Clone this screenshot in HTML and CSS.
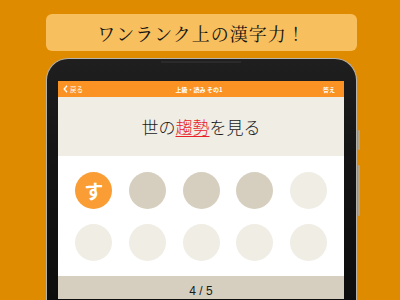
FILE: index.html
```html
<!DOCTYPE html>
<html lang="ja">
<head>
<meta charset="utf-8">
<link rel="stylesheet" href="styles.css">
</head>
<body>
<div class="banner">ワンランク上の漢字力！</div>
<div class="tablet">
  <div class="speaker"></div>
  <div class="btn btn1"></div>
  <div class="btn btn2"></div>
  <div class="screen">
    <div class="topbar">
      <div class="back"><svg width="5" height="8" viewBox="0 0 5 8"><path d="M4 0.8 L1.2 4 L4 7.2" fill="none" stroke="#fff" stroke-width="1.4"/></svg><span>戻る</span></div>
      <div class="title">上級・読み その1</div>
      <div class="answer">答え</div>
    </div>
    <div class="question">世の<span class="target">趨勢</span>を見る</div>
    <div class="choices">
      <div class="dot on">す</div>
      <div class="dot used"></div>
      <div class="dot used"></div>
      <div class="dot used"></div>
      <div class="dot"></div>
      <div class="dot"></div>
      <div class="dot"></div>
      <div class="dot"></div>
      <div class="dot"></div>
      <div class="dot"></div>
    </div>
    <div class="footer">4 / 5</div>
  </div>
</div>
</body>
</html>
```
FILE: styles.css
```css
html, body {
  margin: 0;
  height: 300px;
  overflow: hidden;
}
body {
  background: #df8b00;
  padding: 14px 43px 0 46px;
  font-family: "Noto Sans CJK JP", "Noto Sans", sans-serif;
}
.banner {
  height: 37px;
  background: #f8bf5e;
  border-radius: 6px;
  display: flex;
  align-items: center;
  justify-content: center;
  font-family: "Noto Serif CJK JP", "Liberation Serif", "Noto Sans CJK JP", serif;
  font-size: 18px;
  letter-spacing: 1px;
  color: #141210;
  font-weight: 400;
}
.tablet {
  position: relative;
  box-sizing: border-box;
  margin-top: 7px;
  height: 242px;
  border: 1.5px solid #b5b2ad;
  border-bottom: none;
  border-radius: 22px 22px 0 0;
  background: linear-gradient(#1f1f1f, #141414 40%, #0d0d0d);
  padding: 22px 10px 0 11px;
}
.speaker {
  position: absolute;
  left: 114px;
  top: 2px;
  width: 80px;
  height: 2px;
  background: #2a2a2a;
}
.btn {
  position: absolute;
  right: -4px;
  width: 2px;
  background: #b3a48c;
  border-radius: 1px;
}
.btn1 { top: 71px; height: 20px; }
.btn2 { top: 106px; height: 51px; }
.screen {
  width: 286px;
  height: 218px;
  display: flex;
  flex-direction: column;
  background: #fff;
}
.topbar {
  flex: none;
  height: 16px;
  background: #fb9224;
  display: flex;
  align-items: center;
  justify-content: space-between;
  padding: 0 9px 0 5px;
  color: #fff;
  font-size: 6px;
  font-weight: 700;
}
.back {
  display: flex;
  align-items: center;
  gap: 2px;
  width: 40px;
  font-size: 6.5px;
  font-weight: 400;
}
.title {
  flex: 1;
  text-align: center;
}
.answer {
  width: 40px;
  text-align: right;
}
.question {
  flex: none;
  height: 59px;
  background: #f0ede5;
  display: flex;
  align-items: center;
  justify-content: center;
  font-size: 17px;
  color: #1a1a1a;
  font-weight: 300;
}
.target {
  color: #e8202a;
  text-decoration: underline;
  text-decoration-thickness: 1px;
  text-underline-offset: 2px;
}
.choices {
  flex: none;
  display: grid;
  grid-template-columns: repeat(5, 37px);
  grid-auto-rows: 37px;
  column-gap: 16.6px;
  row-gap: 15px;
  justify-content: center;
  align-content: start;
  padding-top: 16px;
  height: 120px;
  box-sizing: border-box;
}
.dot {
  width: 37px;
  height: 37px;
  border-radius: 50%;
  background: #f0ede5;
  display: flex;
  align-items: center;
  justify-content: center;
  color: #fff;
  font-size: 19px;
  font-weight: 700;
}
.dot.used { background: #d6cfbf; }
.dot.on { background: #fb9d35; }
.footer {
  flex: 1;
  background: #d6cfbf;
  display: flex;
  justify-content: center;
  padding-top: 8px;
  font-family: "Liberation Sans", Arial, sans-serif;
  font-size: 12px;
  color: #1a1a1a;
}
```
